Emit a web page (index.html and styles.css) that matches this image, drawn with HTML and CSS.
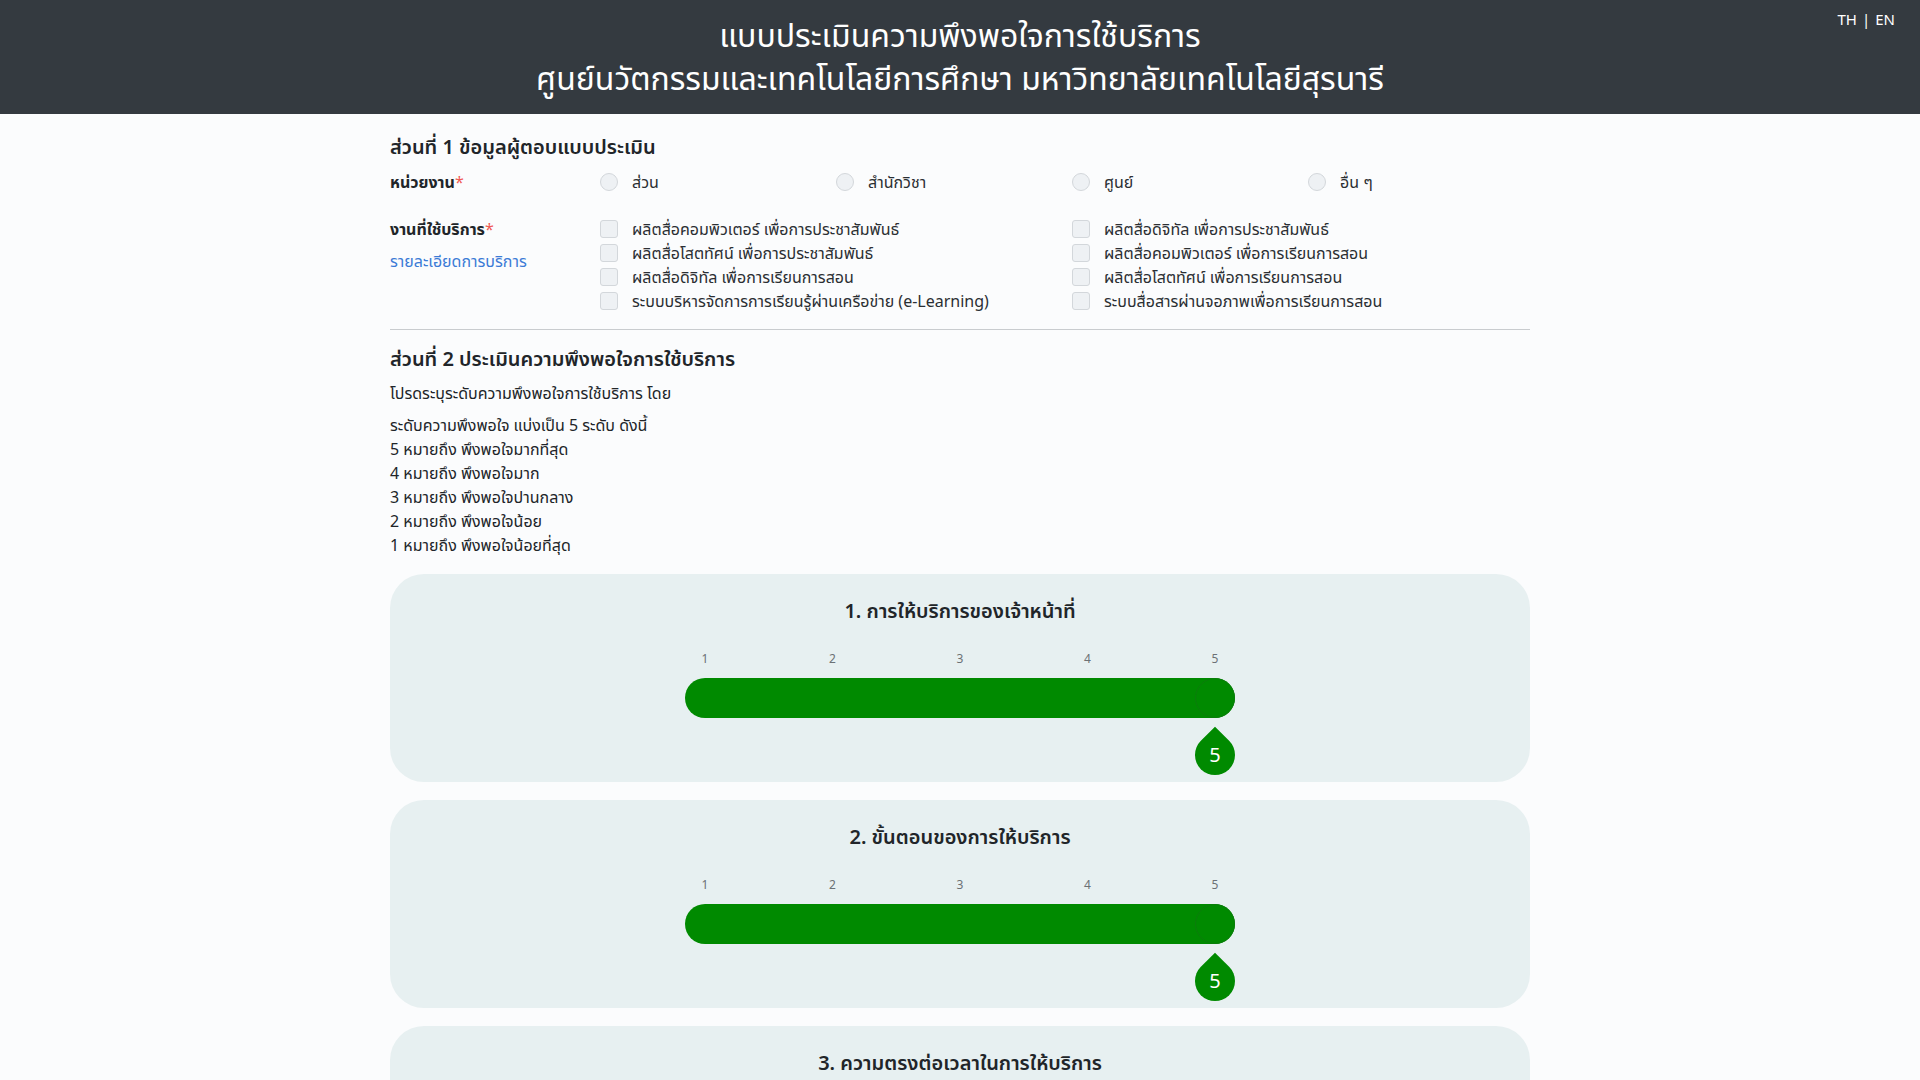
FILE: index.html
```html
<!DOCTYPE html>
<html lang="th">
<head>
<meta charset="utf-8">
<title>แบบประเมินความพึงพอใจการใช้บริการ</title>
<link rel="stylesheet" href="styles.css">
</head>
<body>
<header class="topbar">
  <h1 class="title">แบบประเมินความพึงพอใจการใช้บริการ<br>ศูนย์นวัตกรรมและเทคโนโลยีการศึกษา มหาวิทยาลัยเทคโนโลยีสุรนารี</h1>
  <div class="lang"><span>TH</span><span class="sep">|</span><span>EN</span></div>
</header>

<main class="container">
  <h2 class="section-title first">ส่วนที่ 1 ข้อมูลผู้ตอบแบบประเมิน</h2>

  <div class="form-row unit-row">
    <div class="label-col"><span class="label">หน่วยงาน<span class="req">*</span></span></div>
    <div class="radio-grid">
      <label class="opt"><span class="radio"></span>ส่วน</label>
      <label class="opt"><span class="radio"></span>สำนักวิชา</label>
      <label class="opt"><span class="radio"></span>ศูนย์</label>
      <label class="opt"><span class="radio"></span>อื่น ๆ</label>
    </div>
  </div>

  <div class="form-row service-row">
    <div class="label-col">
      <span class="label">งานที่ใช้บริการ<span class="req">*</span></span>
      <a class="link" href="#">รายละเอียดการบริการ</a>
    </div>
    <div class="check-grid">
      <label class="opt"><span class="check"></span>ผลิตสื่อคอมพิวเตอร์ เพื่อการประชาสัมพันธ์</label>
      <label class="opt"><span class="check"></span>ผลิตสื่อดิจิทัล เพื่อการประชาสัมพันธ์</label>
      <label class="opt"><span class="check"></span>ผลิตสื่อโสตทัศน์ เพื่อการประชาสัมพันธ์</label>
      <label class="opt"><span class="check"></span>ผลิตสื่อคอมพิวเตอร์ เพื่อการเรียนการสอน</label>
      <label class="opt"><span class="check"></span>ผลิตสื่อดิจิทัล เพื่อการเรียนการสอน</label>
      <label class="opt"><span class="check"></span>ผลิตสื่อโสตทัศน์ เพื่อการเรียนการสอน</label>
      <label class="opt"><span class="check"></span>ระบบบริหารจัดการการเรียนรู้ผ่านเครือข่าย (e-Learning)</label>
      <label class="opt"><span class="check"></span>ระบบสื่อสารผ่านจอภาพเพื่อการเรียนการสอน</label>
    </div>
  </div>

  <hr class="divider">

  <h2 class="section-title">ส่วนที่ 2 ประเมินความพึงพอใจการใช้บริการ</h2>
  <p class="intro">โปรดระบุระดับความพึงพอใจการใช้บริการ โดย</p>
  <p class="levels">ระดับความพึงพอใจ แบ่งเป็น 5 ระดับ ดังนี้<br>5 หมายถึง พึงพอใจมากที่สุด<br>4 หมายถึง พึงพอใจมาก<br>3 หมายถึง พึงพอใจปานกลาง<br>2 หมายถึง พึงพอใจน้อย<br>1 หมายถึง พึงพอใจน้อยที่สุด</p>

  <section class="card">
    <h3 class="card-title">1. การให้บริการของเจ้าหน้าที่</h3>
    <div class="slider">
      <div class="pips"><span>1</span><span>2</span><span>3</span><span>4</span><span>5</span></div>
      <div class="track"><span class="handle"></span></div>
      <div class="tip-row"><span class="tip"><span class="tip-num">5</span></span></div>
    </div>
  </section>

  <section class="card">
    <h3 class="card-title">2. ขั้นตอนของการให้บริการ</h3>
    <div class="slider">
      <div class="pips"><span>1</span><span>2</span><span>3</span><span>4</span><span>5</span></div>
      <div class="track"><span class="handle"></span></div>
      <div class="tip-row"><span class="tip"><span class="tip-num">5</span></span></div>
    </div>
  </section>

  <section class="card">
    <h3 class="card-title">3. ความตรงต่อเวลาในการให้บริการ</h3>
    <div class="slider">
      <div class="pips"><span>1</span><span>2</span><span>3</span><span>4</span><span>5</span></div>
      <div class="track"><span class="handle"></span></div>
      <div class="tip-row"><span class="tip"><span class="tip-num">5</span></span></div>
    </div>
  </section>
</main>
</body>
</html>
```

FILE: styles.css
```css
* { box-sizing: border-box; }

html, body {
  margin: 0;
  padding: 0;
}

body {
  background: #fbfcfd;
  color: #212529;
  font-family: "Noto Sans", "Noto Sans Thai", sans-serif;
  font-size: 16px;
  line-height: 24px;
}

.topbar {
  position: relative;
  height: 114px;
  background: #343a40;
  color: #ffffff;
  padding-top: 13px;
  text-align: center;
}

.title {
  margin: 0;
  font-size: 32px;
  font-weight: 400;
  line-height: 43px;
}

.lang {
  position: absolute;
  top: 7px;
  right: 25px;
  font-size: 15px;
  line-height: 24px;
  display: flex;
  gap: 5px;
}

.container {
  width: 1140px;
  margin: 0 auto;
}

.section-title {
  margin: 0;
  font-size: 20px;
  font-weight: 600;
  line-height: 28px;
  color: #212529;
}

.section-title.first {
  margin-top: 19px;
}

.form-row {
  display: flex;
}

.unit-row {
  margin-top: 9px;
}

.service-row {
  margin-top: 23px;
}

.label-col {
  flex: none;
  width: 210px;
  display: flex;
  flex-direction: column;
  gap: 8px;
}

.label {
  font-weight: 700;
  font-size: 16px;
}

.req {
  color: #f05a55;
  font-weight: 400;
}

.link {
  color: #3b7bd6;
  text-decoration: none;
}

.radio-grid {
  flex: 1;
  display: grid;
  grid-template-columns: repeat(3, 236px) auto;
}

.check-grid {
  flex: 1;
  display: grid;
  grid-template-columns: 472px auto;
}

.opt {
  display: flex;
  align-items: center;
  gap: 14px;
  color: #2b2f33;
  white-space: nowrap;
}

.radio,
.check {
  width: 18px;
  height: 18px;
  flex: none;
  border: 1px solid #d3d7db;
  background: #eef1f4;
}

.radio { border-radius: 50%; }
.check { border-radius: 3px; }

.divider {
  margin: 16px 0 0;
  border: 0;
  border-top: 1px solid #c9cccf;
}

.divider + .section-title {
  margin-top: 15px;
}

.intro {
  margin: 8px 0 0;
}

.levels {
  margin: 8px 0 0;
}

.card {
  margin-top: 17px;
  margin-bottom: 18px;
  background: #e7f0f1;
  border-radius: 34px;
  padding: 22px 0 7px;
}

.card + .card {
  margin-top: 0;
}

.card-title {
  margin: 0;
  text-align: center;
  font-size: 20px;
  font-weight: 600;
  line-height: 30px;
  color: #212529;
}

.slider {
  width: 550px;
  margin: 25px auto 0;
}

.pips {
  display: flex;
  justify-content: space-between;
  padding: 0 20px;
  font-size: 12px;
  line-height: 16px;
  color: #6c7175;
}

.pips span {
  width: 0;
  display: flex;
  justify-content: center;
}

.track {
  margin-top: 11px;
  height: 40px;
  border-radius: 20px;
  background: #008a00;
  display: flex;
  justify-content: flex-end;
}

.handle {
  width: 40px;
  height: 40px;
  border-radius: 50%;
  border: 1px solid #0b7d0b;
  background: #008a00;
}

.tip-row {
  margin-top: 17px;
  display: flex;
  justify-content: flex-end;
}

.tip {
  position: relative;
  width: 40px;
  height: 40px;
  display: flex;
  align-items: center;
  justify-content: center;
}

.tip::before {
  content: "";
  position: absolute;
  inset: 0;
  background: #008a00;
  border-radius: 0 50% 50% 50%;
  transform: rotate(45deg);
}

.tip-num {
  position: relative;
  color: #ffffff;
  font-size: 20px;
  line-height: 24px;
}
```
